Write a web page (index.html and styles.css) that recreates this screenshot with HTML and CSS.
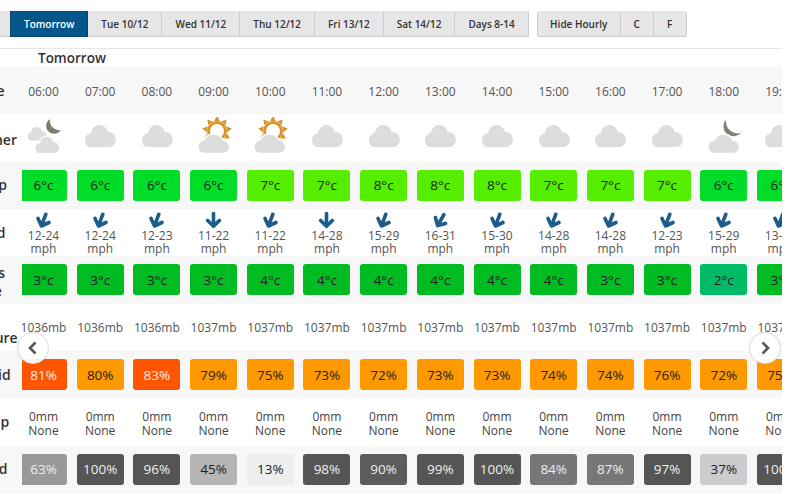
FILE: index.html
```html
<!DOCTYPE html>
<html lang="en">

<head>
    <meta charset="UTF-8">
    <title>Hourly Forecast</title>
    <link rel="stylesheet" href="styles.css">
</head>

<body>
    <svg class="defs" width="0" height="0">
        <symbol id="cloud" viewBox="0 0 44 42" overflow="visible">
            <path d="M11 30A7.5 7.5 0 0 1 13 16A8.6 8.6 0 0 1 30 15A7.6 7.6 0 0 1 32 30Z"/>
        </symbol>
        <symbol id="cloud-low" viewBox="0 0 44 42" overflow="visible">
            <path d="M11.5 36.5A6.8 6.8 0 0 1 12 23A10.5 10.5 0 0 1 31 23A6.8 6.8 0 0 1 32 36.5Z"/>
        </symbol>
        <symbol id="arrow" viewBox="0 0 16 16">
            <path d="M8 1.5V13.5M2.5 8L8 13.5L13.5 8"/>
        </symbol>
        <symbol id="sun" viewBox="0 0 44 42" overflow="visible">
            <circle class="sun-ring" cx="25" cy="14" r="8.5"/>
            <g class="sun-rays">
                <polygon transform="rotate(-120 25 14)" points="22,4 28,4 25,-1"/>
                <polygon transform="rotate(-80 25 14)" points="22,4 28,4 25,-1"/>
                <polygon transform="rotate(-40 25 14)" points="22,4 28,4 25,-1"/>
                <polygon points="22,4 28,4 25,-1"/>
                <polygon transform="rotate(40 25 14)" points="22,4 28,4 25,-1"/>
                <polygon transform="rotate(80 25 14)" points="22,4 28,4 25,-1"/>
                <polygon transform="rotate(120 25 14)" points="22,4 28,4 25,-1"/>
            </g>
        </symbol>
    </svg>

    <div class="toolbar">
        <div class="btn-group">
            <span class="btn-stub"></span>
            <button class="btn active">Tomorrow</button>
            <button class="btn">Tue 10/12</button>
            <button class="btn">Wed 11/12</button>
            <button class="btn">Thu 12/12</button>
            <button class="btn">Fri 13/12</button>
            <button class="btn">Sat 14/12</button>
            <button class="btn">Days 8-14</button>
        </div>
        <div class="btn-group">
            <button class="btn btn-hide">Hide Hourly</button>
            <button class="btn btn-unit">C</button>
            <button class="btn btn-unit">F</button>
        </div>
    </div>

    <h2 class="day-title">Tomorrow</h2>

    <div class="forecast">
        <!-- Time -->
        <div class="row">
            <div class="label"><span>Time</span></div>
            <div class="cells">
                <div class="cell time">06:00</div>
                <div class="cell time">07:00</div>
                <div class="cell time">08:00</div>
                <div class="cell time">09:00</div>
                <div class="cell time">10:00</div>
                <div class="cell time">11:00</div>
                <div class="cell time">12:00</div>
                <div class="cell time">13:00</div>
                <div class="cell time">14:00</div>
                <div class="cell time">15:00</div>
                <div class="cell time">16:00</div>
                <div class="cell time">17:00</div>
                <div class="cell time">18:00</div>
                <div class="cell time">19:00</div>
            </div>
        </div>

        <!-- Weather -->
        <div class="row">
            <div class="label"><span class="label-low">Weather</span></div>
            <div class="cells">
                <div class="cell">
                    <svg class="wx" viewBox="0 0 44 42">
                        <use href="#cloud" class="cloud" x="1.5" y="5" width="27" height="25.8"/>
                        <path class="moon" d="M28 2A8 8 0 1 0 39 13A9.5 9.5 0 0 1 28 2Z"/>
                        <use href="#cloud" class="cloud halo" x="7.4" y="12.6" width="35.2" height="33.6"/>
                    </svg>
                </div>
                <div class="cell"><svg class="wx" viewBox="0 0 44 42"><use href="#cloud" class="cloud"/></svg></div>
                <div class="cell"><svg class="wx" viewBox="0 0 44 42"><use href="#cloud" class="cloud"/></svg></div>
                <div class="cell">
                    <svg class="wx" viewBox="0 0 44 42">
                        <use href="#sun"/>
                        <use href="#cloud-low" class="cloud halo"/>
                    </svg>
                </div>
                <div class="cell">
                    <svg class="wx" viewBox="0 0 44 42">
                        <use href="#sun"/>
                        <use href="#cloud-low" class="cloud halo"/>
                    </svg>
                </div>
                <div class="cell"><svg class="wx" viewBox="0 0 44 42"><use href="#cloud" class="cloud"/></svg></div>
                <div class="cell"><svg class="wx" viewBox="0 0 44 42"><use href="#cloud" class="cloud"/></svg></div>
                <div class="cell"><svg class="wx" viewBox="0 0 44 42"><use href="#cloud" class="cloud"/></svg></div>
                <div class="cell"><svg class="wx" viewBox="0 0 44 42"><use href="#cloud" class="cloud"/></svg></div>
                <div class="cell"><svg class="wx" viewBox="0 0 44 42"><use href="#cloud" class="cloud"/></svg></div>
                <div class="cell"><svg class="wx" viewBox="0 0 44 42"><use href="#cloud" class="cloud"/></svg></div>
                <div class="cell"><svg class="wx" viewBox="0 0 44 42"><use href="#cloud" class="cloud"/></svg></div>
                <div class="cell">
                    <svg class="wx" viewBox="0 0 44 42">
                        <path class="moon" d="M24 2.5A10 10 0 1 0 39 16A12 12 0 0 1 24 2.5Z"/>
                        <use href="#cloud-low" class="cloud halo"/>
                    </svg>
                </div>
                <div class="cell"><svg class="wx" viewBox="0 0 44 42"><use href="#cloud" class="cloud"/></svg></div>
            </div>
        </div>

        <!-- Temp -->
        <div class="row">
            <div class="label"><span>Temp</span></div>
            <div class="cells">
                <div class="cell"><div class="box t6">6°c</div></div>
                <div class="cell"><div class="box t6">6°c</div></div>
                <div class="cell"><div class="box t6">6°c</div></div>
                <div class="cell"><div class="box t6">6°c</div></div>
                <div class="cell"><div class="box t7">7°c</div></div>
                <div class="cell"><div class="box t7">7°c</div></div>
                <div class="cell"><div class="box t7">8°c</div></div>
                <div class="cell"><div class="box t7">8°c</div></div>
                <div class="cell"><div class="box t7">8°c</div></div>
                <div class="cell"><div class="box t7">7°c</div></div>
                <div class="cell"><div class="box t7">7°c</div></div>
                <div class="cell"><div class="box t7">7°c</div></div>
                <div class="cell"><div class="box t6">6°c</div></div>
                <div class="cell"><div class="box t6">6°c</div></div>
            </div>
        </div>

        <!-- Wind -->
        <div class="row">
            <div class="label"><span>Wind</span></div>
            <div class="cells">
                <div class="cell wind"><svg class="arrow tilt"><use href="#arrow"/></svg>12-24<br>mph</div>
                <div class="cell wind"><svg class="arrow tilt"><use href="#arrow"/></svg>12-24<br>mph</div>
                <div class="cell wind"><svg class="arrow tilt"><use href="#arrow"/></svg>12-23<br>mph</div>
                <div class="cell wind"><svg class="arrow"><use href="#arrow"/></svg>11-22<br>mph</div>
                <div class="cell wind"><svg class="arrow tilt"><use href="#arrow"/></svg>11-22<br>mph</div>
                <div class="cell wind"><svg class="arrow"><use href="#arrow"/></svg>14-28<br>mph</div>
                <div class="cell wind"><svg class="arrow tilt"><use href="#arrow"/></svg>15-29<br>mph</div>
                <div class="cell wind"><svg class="arrow tilt-more"><use href="#arrow"/></svg>16-31<br>mph</div>
                <div class="cell wind"><svg class="arrow tilt"><use href="#arrow"/></svg>15-30<br>mph</div>
                <div class="cell wind"><svg class="arrow tilt"><use href="#arrow"/></svg>14-28<br>mph</div>
                <div class="cell wind"><svg class="arrow tilt"><use href="#arrow"/></svg>14-28<br>mph</div>
                <div class="cell wind"><svg class="arrow tilt"><use href="#arrow"/></svg>12-23<br>mph</div>
                <div class="cell wind"><svg class="arrow tilt"><use href="#arrow"/></svg>15-29<br>mph</div>
                <div class="cell wind"><svg class="arrow tilt"><use href="#arrow"/></svg>13-26<br>mph</div>
            </div>
        </div>

        <!-- Feels like -->
        <div class="row">
            <div class="label"><span class="label-low">Feels<br>Like</span></div>
            <div class="cells">
                <div class="cell"><div class="box f3">3°c</div></div>
                <div class="cell"><div class="box f3">3°c</div></div>
                <div class="cell"><div class="box f3">3°c</div></div>
                <div class="cell"><div class="box f3">3°c</div></div>
                <div class="cell"><div class="box f3">4°c</div></div>
                <div class="cell"><div class="box f3">4°c</div></div>
                <div class="cell"><div class="box f3">4°c</div></div>
                <div class="cell"><div class="box f3">4°c</div></div>
                <div class="cell"><div class="box f3">4°c</div></div>
                <div class="cell"><div class="box f3">4°c</div></div>
                <div class="cell"><div class="box f3">3°c</div></div>
                <div class="cell"><div class="box f3">3°c</div></div>
                <div class="cell"><div class="box f2">2°c</div></div>
                <div class="cell"><div class="box f3">3°c</div></div>
            </div>
        </div>

        <!-- Pressure -->
        <div class="row">
            <div class="label"><span class="label-low">Air<br>Pressure</span></div>
            <div class="cells">
                <div class="cell">1036mb</div>
                <div class="cell">1036mb</div>
                <div class="cell">1036mb</div>
                <div class="cell">1037mb</div>
                <div class="cell">1037mb</div>
                <div class="cell">1037mb</div>
                <div class="cell">1037mb</div>
                <div class="cell">1037mb</div>
                <div class="cell">1037mb</div>
                <div class="cell">1037mb</div>
                <div class="cell">1037mb</div>
                <div class="cell">1037mb</div>
                <div class="cell">1037mb</div>
                <div class="cell">1037mb</div>
            </div>
        </div>

        <!-- Humidity -->
        <div class="row">
            <div class="label"><span>Humid</span></div>
            <div class="cells">
                <div class="cell"><div class="box hot">81%</div></div>
                <div class="cell"><div class="box warm">80%</div></div>
                <div class="cell"><div class="box hot">83%</div></div>
                <div class="cell"><div class="box warm">79%</div></div>
                <div class="cell"><div class="box warm">75%</div></div>
                <div class="cell"><div class="box warm">73%</div></div>
                <div class="cell"><div class="box warm">72%</div></div>
                <div class="cell"><div class="box warm">73%</div></div>
                <div class="cell"><div class="box warm">73%</div></div>
                <div class="cell"><div class="box warm">74%</div></div>
                <div class="cell"><div class="box warm">74%</div></div>
                <div class="cell"><div class="box warm">76%</div></div>
                <div class="cell"><div class="box warm">72%</div></div>
                <div class="cell"><div class="box warm">75%</div></div>
            </div>
        </div>

        <!-- Precip -->
        <div class="row">
            <div class="label"><span>Precip</span></div>
            <div class="cells">
                <div class="cell precip">0mm<br>None</div>
                <div class="cell precip">0mm<br>None</div>
                <div class="cell precip">0mm<br>None</div>
                <div class="cell precip">0mm<br>None</div>
                <div class="cell precip">0mm<br>None</div>
                <div class="cell precip">0mm<br>None</div>
                <div class="cell precip">0mm<br>None</div>
                <div class="cell precip">0mm<br>None</div>
                <div class="cell precip">0mm<br>None</div>
                <div class="cell precip">0mm<br>None</div>
                <div class="cell precip">0mm<br>None</div>
                <div class="cell precip">0mm<br>None</div>
                <div class="cell precip">0mm<br>None</div>
                <div class="cell precip">0mm<br>None</div>
            </div>
        </div>

        <!-- Cloud -->
        <div class="row">
            <div class="label"><span>Cloud</span></div>
            <div class="cells">
                <div class="cell"><div class="box c60">63%</div></div>
                <div class="cell"><div class="box c100">100%</div></div>
                <div class="cell"><div class="box c100">96%</div></div>
                <div class="cell"><div class="box c45">45%</div></div>
                <div class="cell"><div class="box c13">13%</div></div>
                <div class="cell"><div class="box c100">98%</div></div>
                <div class="cell"><div class="box c90">90%</div></div>
                <div class="cell"><div class="box c100">99%</div></div>
                <div class="cell"><div class="box c100">100%</div></div>
                <div class="cell"><div class="box c80">84%</div></div>
                <div class="cell"><div class="box c80">87%</div></div>
                <div class="cell"><div class="box c100">97%</div></div>
                <div class="cell"><div class="box c37">37%</div></div>
                <div class="cell"><div class="box c100">100%</div></div>
            </div>
        </div>

        <button class="nav nav-prev">
            <svg viewBox="0 0 16 16"><path d="M10.5 2.5L5 8L10.5 13.5"/></svg>
        </button>
        <button class="nav nav-next">
            <svg viewBox="0 0 16 16"><path d="M5.5 2.5L11 8L5.5 13.5"/></svg>
        </button>
    </div>
</body>

</html>
```

FILE: styles.css
```css
html, body {
    height: 100%;
}

body {
    margin: 0;
    overflow: hidden;
    font-family: 'Open Sans', sans-serif;
    font-size: 12px;
    color: #555;
    background-color: #fff;
}

.defs {
    position: absolute;
}

/* Toolbar */
.toolbar {
    display: flex;
    gap: 8px;
    width: 782px;
    box-sizing: border-box;
    height: 49px;
    padding-top: 11px;
    border-bottom: 1px solid #e8e8e8;
}

.btn-group {
    display: flex;
    height: 26px;
}

.btn-stub {
    width: 10px;
    background-color: #e6e6e6;
    border-bottom: 1px solid #ccc;
    box-sizing: border-box;
}

.btn {
    height: 26px;
    padding: 0 13px;
    margin: 0;
    font-family: 'Open Sans', sans-serif;
    font-size: 10px;
    font-weight: 600;
    color: #333;
    background-color: #e6e6e6;
    border: 1px solid #ccc;
    border-left-width: 0;
    border-top-color: #e6e6e6;
}

.btn.active {
    color: #fff;
    background-color: #05568a;
    border: 1px solid #0a4468;
}

.btn-hide {
    width: 84px;
    padding: 0;
    border-left-width: 1px;
    border-radius: 3px 0 0 3px;
}

.btn-unit {
    width: 33px;
    padding: 0;
}

.btn-unit:last-child {
    border-radius: 0 3px 3px 0;
}

.day-title {
    margin: 0;
    height: 18px;
    padding-left: 38px;
    font-size: 13.5px;
    line-height: 19px;
    font-weight: 600;
    color: #333;
}

/* Forecast table */
.forecast {
    position: relative;
    width: 782px;
}

.row {
    display: flex;
    height: 47.33px;
    overflow: hidden;
}

.row:nth-child(odd) {
    background-color: #f7f7f7;
}

.label {
    flex: none;
    display: flex;
    align-items: center;
    width: 22px;
    overflow: hidden;
}

.label span {
    flex: none;
    width: 70px;
    margin-left: -47px;
    font-size: 14px;
    line-height: 18px;
    font-weight: 600;
    text-align: center;
    color: #333;
}

.label .label-low {
    padding-top: 4px;
}

.cells {
    flex: none;
    display: grid;
    grid-template-columns: repeat(14, 56.7px);
    width: 760px;
    overflow: hidden;
}

.cell {
    display: flex;
    flex-direction: column;
    align-items: center;
    justify-content: center;
    margin-left: -6.85px;
    margin-right: 6.85px;
    text-align: center;
    white-space: nowrap;
}

.time {
    padding-top: 1px;
}

.box {
    display: flex;
    align-items: center;
    justify-content: center;
    flex: none;
    width: 47px;
    height: 31px;
    font-size: 13.5px;
    color: #222;
    border-radius: 3px;
}

/* Temperature colours */
.t6 { background-color: #00dc28; }
.t7 { background-color: #55ee00; }
.f3 { background-color: #00bb22; }
.f2 { background-color: #00bb66; }
.warm { background-color: #ff9900; }
.hot { background-color: #ff5500; color: #eee; }

/* Cloud cover colours */
.c100 { background-color: #555; color: #eee; }
.c90 { background-color: #5c5c5c; color: #eee; }
.c80 { background-color: #777; color: #eee; }
.c60 { background-color: #999; color: #eee; }
.c45 { background-color: #b5b5b5; }
.c37 { background-color: #ccc; }
.c13 { background-color: #eee; }

/* Icons */
.wx {
    width: 44px;
    height: 42px;
}

.cloud {
    fill: #dcdedd;
}

.halo {
    stroke: #fff;
    stroke-width: 1.5;
}

.moon {
    fill: #7d8070;
}

.sun-ring {
    fill: none;
    stroke: #d9952c;
    stroke-width: 3;
}

.sun-rays {
    fill: #d9952c;
}

.wind {
    padding-top: 2.4px;
    line-height: 12.5px;
}

.arrow {
    flex: none;
    width: 17px;
    height: 17px;
    margin-bottom: 1px;
    fill: none;
    stroke: #1c5d8c;
    stroke-width: 3.4;
    stroke-linejoin: round;
    stroke-linecap: round;
}

.tilt {
    transform: rotate(20deg);
}

.tilt-more {
    transform: rotate(30deg);
}

.precip {
    padding-top: 4px;
    line-height: 14px;
    color: #444;
}

/* Carousel buttons */
.nav {
    position: absolute;
    top: 265px;
    width: 32px;
    height: 32px;
    padding: 7px;
    background-color: rgba(255, 255, 255, 0.92);
    border: 1px solid #ddd;
    border-radius: 50%;
    box-shadow: 0 0 1px rgba(0, 0, 0, 0.15);
}

.nav svg {
    display: block;
    fill: none;
    stroke: #555;
    stroke-width: 2.6;
}

.nav-prev {
    left: 17px;
}

.nav-next {
    left: 749px;
}
```
